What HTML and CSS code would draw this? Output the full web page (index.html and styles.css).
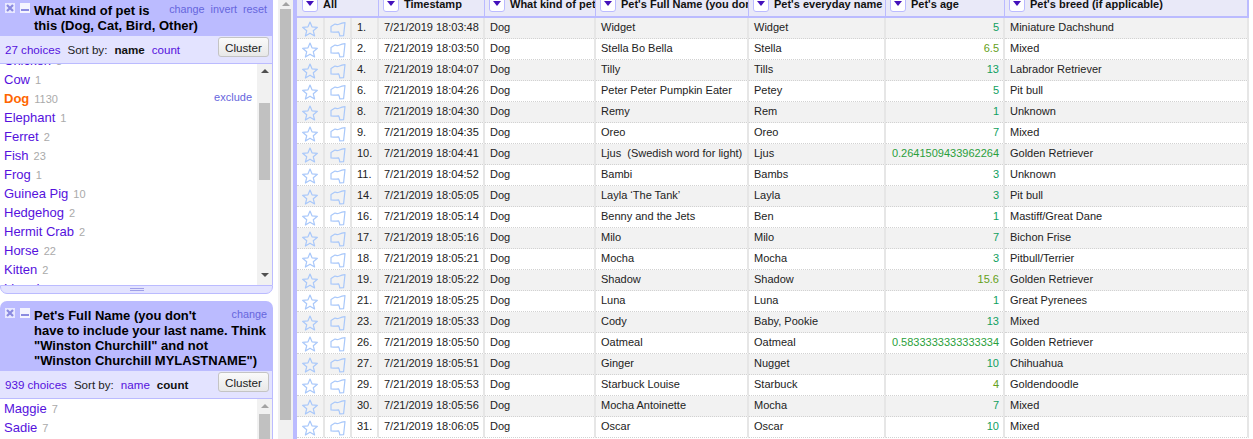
FILE: index.html
```html
<!DOCTYPE html>
<html lang="en">
<head>
<meta charset="utf-8">
<title>Facets and rows</title>
<link rel="stylesheet" href="styles.css">
</head>
<body>
<svg class="defs" width="0" height="0" aria-hidden="true">
  <symbol id="star" viewBox="0 0 16 16"><path d="M8 1 L10 5.8 L15.4 6.3 L11.3 9.8 L12.6 15 L8 12.2 L3.4 15 L4.7 9.8 L0.6 6.3 L6 5.8 Z" fill="none" stroke="#a9c8fa" stroke-width="1.2" stroke-linejoin="round"/></symbol>
  <symbol id="flag" viewBox="0 0 16 16"><path d="M1 5.5 L5 3 Q7 4 9 3.2 Q12 2 15 1.6 L13.6 14.6 L9.8 14.8 Q9.4 12 8.6 10.8 Q5 11.2 1 11 Z" fill="none" stroke="#a9c8fa" stroke-width="1.2" stroke-linejoin="round"/></symbol>
  <symbol id="close" viewBox="0 0 10 10"><rect width="10" height="10" fill="#e8e8ff"/><path d="M2 2 L8 8 M8 2 L2 8" stroke="#8a8ae0" stroke-width="2.2"/></symbol>
  <symbol id="minus" viewBox="0 0 10 10"><rect width="10" height="10" fill="#f4f4ff"/><rect x="1" y="6" width="8" height="2" fill="#8a8ae0"/></symbol>
</svg>

<aside class="left">
  <section class="facet facet-first">
    <header class="facet-head">
      <span class="facet-icons">
        <svg class="tool"><use href="#close"/></svg>
        <svg class="tool"><use href="#minus"/></svg>
      </span>
      <div class="head-text">
        <span class="facet-actions"><a>change</a><a>invert</a><a>reset</a></span>
        <h2 class="facet-title">What kind of pet is this (Dog, Cat, Bird, Other)</h2>
      </div>
    </header>
    <div class="facet-controls">
      <a class="choices">27 choices</a>
      <span>Sort by:</span>
      <b>name</b>
      <a class="choices">count</a>
      <button class="cluster">Cluster</button>
    </div>
    <div class="facet-body body-first">
      <ul class="choice-list list-scrolled">
        <li><a>Chicken</a><span class="n">3</span></li>
        <li><a>Cow</a><span class="n">1</span></li>
        <li><a class="selected">Dog</a><span class="n">1130</span><a class="exclude">exclude</a></li>
        <li><a>Elephant</a><span class="n">1</span></li>
        <li><a>Ferret</a><span class="n">2</span></li>
        <li><a>Fish</a><span class="n">23</span></li>
        <li><a>Frog</a><span class="n">1</span></li>
        <li><a>Guinea Pig</a><span class="n">10</span></li>
        <li><a>Hedgehog</a><span class="n">2</span></li>
        <li><a>Hermit Crab</a><span class="n">2</span></li>
        <li><a>Horse</a><span class="n">22</span></li>
        <li><a>Kitten</a><span class="n">2</span></li>
        <li><a>Lizard</a><span class="n">1</span></li>
      </ul>
      <div class="bar">
        <span class="arrow-up"></span>
        <span class="thumb thumb-first"></span>
        <span class="arrow-down"></span>
      </div>
    </div>
    <div class="resize"><span class="grip"></span></div>
  </section>

  <section class="facet facet-second">
    <header class="facet-head head-round">
      <span class="facet-icons">
        <svg class="tool"><use href="#close"/></svg>
        <svg class="tool"><use href="#minus"/></svg>
      </span>
      <div class="head-text">
        <span class="facet-actions"><a>change</a></span>
        <h2 class="facet-title">Pet's Full Name (you don't have to include your last name. Think "Winston Churchill" and not "Winston Churchill MYLASTNAME")</h2>
      </div>
    </header>
    <div class="facet-controls">
      <a class="choices">939 choices</a>
      <span>Sort by:</span>
      <a class="choices">name</a>
      <b>count</b>
      <button class="cluster">Cluster</button>
    </div>
    <div class="facet-body body-second">
      <ul class="choice-list">
        <li><a>Maggie</a><span class="n">7</span></li>
        <li><a>Sadie</a><span class="n">7</span></li>
      </ul>
      <div class="bar">
        <span class="arrow-up arrow-off"></span>
        <span class="thumb thumb-second"></span>
      </div>
    </div>
  </section>
</aside>

<div class="page-bar">
  <span class="arrow-up arrow-off"></span>
  <span class="page-thumb"></span>
</div>

<main class="main">
  <table class="grid">
    <colgroup>
      <col class="c-star"><col class="c-flag"><col class="c-idx"><col class="c-time"><col class="c-kind"><col class="c-name"><col class="c-day"><col class="c-age"><col class="c-breed">
    </colgroup>
    <thead>
      <tr>
        <th colspan="3"><div class="th-in th-all"><span class="drop"></span>All</div></th>
        <th><div class="th-in"><span class="drop"></span>Timestamp</div></th>
        <th><div class="th-in"><span class="drop"></span>What kind of pet is this (Dog, Cat, Bird, Other)</div></th>
        <th><div class="th-in"><span class="drop"></span>Pet's Full Name (you don't have to include</div></th>
        <th><div class="th-in"><span class="drop"></span>Pet's everyday name</div></th>
        <th><div class="th-in"><span class="drop"></span>Pet's age</div></th>
        <th class="th-last"><div class="th-in"><span class="drop"></span>Pet's breed (if applicable)</div></th>
      </tr>
    </thead>
    <tbody>
      <tr><td class="ic"><svg class="i"><use href="#star"/></svg></td><td class="ic"><svg class="i"><use href="#flag"/></svg></td><td>1.</td><td>7/21/2019 18:03:48</td><td>Dog</td><td>Widget</td><td>Widget</td><td class="num">5</td><td>Miniature Dachshund</td></tr>
      <tr><td class="ic"><svg class="i"><use href="#star"/></svg></td><td class="ic"><svg class="i"><use href="#flag"/></svg></td><td>2.</td><td>7/21/2019 18:03:50</td><td>Dog</td><td>Stella Bo Bella</td><td>Stella</td><td class="num fl">6.5</td><td>Mixed</td></tr>
      <tr><td class="ic"><svg class="i"><use href="#star"/></svg></td><td class="ic"><svg class="i"><use href="#flag"/></svg></td><td>4.</td><td>7/21/2019 18:04:07</td><td>Dog</td><td>Tilly</td><td>Tills</td><td class="num">13</td><td>Labrador Retriever</td></tr>
      <tr><td class="ic"><svg class="i"><use href="#star"/></svg></td><td class="ic"><svg class="i"><use href="#flag"/></svg></td><td>6.</td><td>7/21/2019 18:04:26</td><td>Dog</td><td>Peter Peter Pumpkin Eater</td><td>Petey</td><td class="num">5</td><td>Pit bull</td></tr>
      <tr><td class="ic"><svg class="i"><use href="#star"/></svg></td><td class="ic"><svg class="i"><use href="#flag"/></svg></td><td>8.</td><td>7/21/2019 18:04:30</td><td>Dog</td><td>Remy</td><td>Rem</td><td class="num">1</td><td>Unknown</td></tr>
      <tr><td class="ic"><svg class="i"><use href="#star"/></svg></td><td class="ic"><svg class="i"><use href="#flag"/></svg></td><td>9.</td><td>7/21/2019 18:04:35</td><td>Dog</td><td>Oreo</td><td>Oreo</td><td class="num">7</td><td>Mixed</td></tr>
      <tr><td class="ic"><svg class="i"><use href="#star"/></svg></td><td class="ic"><svg class="i"><use href="#flag"/></svg></td><td>10.</td><td>7/21/2019 18:04:41</td><td>Dog</td><td>Ljus&nbsp; (Swedish word for light)</td><td>Ljus</td><td class="num long">0.2641509433962264</td><td>Golden Retriever</td></tr>
      <tr><td class="ic"><svg class="i"><use href="#star"/></svg></td><td class="ic"><svg class="i"><use href="#flag"/></svg></td><td>11.</td><td>7/21/2019 18:04:52</td><td>Dog</td><td>Bambi</td><td>Bambs</td><td class="num">3</td><td>Unknown</td></tr>
      <tr><td class="ic"><svg class="i"><use href="#star"/></svg></td><td class="ic"><svg class="i"><use href="#flag"/></svg></td><td>14.</td><td>7/21/2019 18:05:05</td><td>Dog</td><td>Layla ‘The Tank’</td><td>Layla</td><td class="num">3</td><td>Pit bull</td></tr>
      <tr><td class="ic"><svg class="i"><use href="#star"/></svg></td><td class="ic"><svg class="i"><use href="#flag"/></svg></td><td>16.</td><td>7/21/2019 18:05:14</td><td>Dog</td><td>Benny and the Jets</td><td>Ben</td><td class="num">1</td><td>Mastiff/Great Dane</td></tr>
      <tr><td class="ic"><svg class="i"><use href="#star"/></svg></td><td class="ic"><svg class="i"><use href="#flag"/></svg></td><td>17.</td><td>7/21/2019 18:05:16</td><td>Dog</td><td>Milo</td><td>Milo</td><td class="num">7</td><td>Bichon Frise</td></tr>
      <tr><td class="ic"><svg class="i"><use href="#star"/></svg></td><td class="ic"><svg class="i"><use href="#flag"/></svg></td><td>18.</td><td>7/21/2019 18:05:21</td><td>Dog</td><td>Mocha</td><td>Mocha</td><td class="num">3</td><td>Pitbull/Terrier</td></tr>
      <tr><td class="ic"><svg class="i"><use href="#star"/></svg></td><td class="ic"><svg class="i"><use href="#flag"/></svg></td><td>19.</td><td>7/21/2019 18:05:22</td><td>Dog</td><td>Shadow</td><td>Shadow</td><td class="num fl">15.6</td><td>Golden Retriever</td></tr>
      <tr><td class="ic"><svg class="i"><use href="#star"/></svg></td><td class="ic"><svg class="i"><use href="#flag"/></svg></td><td>21.</td><td>7/21/2019 18:05:25</td><td>Dog</td><td>Luna</td><td>Luna</td><td class="num">1</td><td>Great Pyrenees</td></tr>
      <tr><td class="ic"><svg class="i"><use href="#star"/></svg></td><td class="ic"><svg class="i"><use href="#flag"/></svg></td><td>23.</td><td>7/21/2019 18:05:33</td><td>Dog</td><td>Cody</td><td>Baby, Pookie</td><td class="num">13</td><td>Mixed</td></tr>
      <tr><td class="ic"><svg class="i"><use href="#star"/></svg></td><td class="ic"><svg class="i"><use href="#flag"/></svg></td><td>26.</td><td>7/21/2019 18:05:50</td><td>Dog</td><td>Oatmeal</td><td>Oatmeal</td><td class="num long">0.5833333333333334</td><td>Golden Retriever</td></tr>
      <tr><td class="ic"><svg class="i"><use href="#star"/></svg></td><td class="ic"><svg class="i"><use href="#flag"/></svg></td><td>27.</td><td>7/21/2019 18:05:51</td><td>Dog</td><td>Ginger</td><td>Nugget</td><td class="num">10</td><td>Chihuahua</td></tr>
      <tr><td class="ic"><svg class="i"><use href="#star"/></svg></td><td class="ic"><svg class="i"><use href="#flag"/></svg></td><td>29.</td><td>7/21/2019 18:05:53</td><td>Dog</td><td>Starbuck Louise</td><td>Starbuck</td><td class="num fl">4</td><td>Goldendoodle</td></tr>
      <tr><td class="ic"><svg class="i"><use href="#star"/></svg></td><td class="ic"><svg class="i"><use href="#flag"/></svg></td><td>30.</td><td>7/21/2019 18:05:56</td><td>Dog</td><td>Mocha Antoinette</td><td>Mocha</td><td class="num">7</td><td>Mixed</td></tr>
      <tr><td class="ic"><svg class="i"><use href="#star"/></svg></td><td class="ic"><svg class="i"><use href="#flag"/></svg></td><td>31.</td><td>7/21/2019 18:06:05</td><td>Dog</td><td>Oscar</td><td>Oscar</td><td class="num">10</td><td>Mixed</td></tr>
    </tbody>
  </table>
</main>
</body>
</html>
```
FILE: styles.css
```css
* { box-sizing: border-box; }
html, body { margin: 0; height: 439px; overflow: hidden; }
body { display: flex; background: #fff; font-family: "Liberation Sans", Arial, sans-serif; color: #000; }
.defs { display: none; }
a { cursor: pointer; }

/* left column */
.left { width: 278px; height: 439px; overflow: hidden; flex: none; }
.facet { width: 273px; }
.facet-second { margin-top: 7px; }
.facet-head { display: flex; align-items: flex-start; background: #bbbbff; padding: 3px 6px 0 5px; height: 36px; }
.head-round { border-radius: 7px 7px 0 0; padding-top: 7px; height: 70px; }
.facet-icons { display: flex; gap: 5px; flex: none; width: 29px; }
.tool { width: 10px; height: 10px; display: block; }
.head-text { flex: 1; min-width: 0; }
.facet-title { margin: 0; font-size: 13px; line-height: 15px; font-weight: bold; color: #000; }
.facet-actions { float: right; display: flex; gap: 6px; margin-left: 8px; font-size: 10.8px; line-height: 12px; color: #6666dd; }

.facet-controls { display: flex; align-items: center; gap: 7px; height: 28px; background: #e3e3ff; border-bottom: 1px solid #bbbbff; border-right: 1px solid #bbbbff; padding: 0 3px 0 5px; font-size: 11.6px; color: #222; }
.facet-controls b { color: #111; }
.choices { color: #5511dd; }
.cluster { margin-left: auto; width: 51px; height: 20px; padding: 0; margin-top: -5px; font: 11.7px "Liberation Sans", Arial, sans-serif; color: #222; background: linear-gradient(#fafafa, #e8e8e8); border: 1px solid #c4c4c4; border-radius: 3px; }

.facet-body { display: flex; background: #fff; border-right: 1px solid #bbbbff; overflow: hidden; }
.body-first { height: 221px; }
.body-second { height: 60px; }
.choice-list { list-style: none; margin: 0; padding: 0; flex: 1; min-width: 0; }
.list-scrolled { margin-top: -13px; }
.choice-list li { display: flex; align-items: center; height: 19px; padding-left: 4px; font-size: 13px; color: #5511dd; }
.n { margin-left: 5px; font-size: 11px; color: #aaa; }
.selected { color: #ff6600; font-weight: bold; }
.exclude { margin-left: auto; margin-right: 5px; margin-top: -3px; font-size: 11px; color: #6666dd; }

.bar { width: 15px; flex: none; background: #f1f1f1; display: flex; flex-direction: column; align-items: center; }
.body-first .bar { height: 221px; }
.arrow-up, .arrow-down { width: 0; height: 0; border-left: 4px solid transparent; border-right: 4px solid transparent; flex: none; }
.arrow-up { border-bottom: 4px solid #505050; margin-top: 5px; }
.arrow-down { border-top: 4px solid #505050; margin-top: 93px; }
.arrow-off { border-bottom-color: #a3a3a3; }
.thumb { display: block; width: 11px; background: #c1c1c1; flex: none; }
.thumb-first { height: 77px; margin-top: 30px; }
.thumb-second { height: 40px; margin-top: 6px; }

.resize { height: 9px; background: #e3e3ff; border: 1px solid #bbbbff; border-radius: 0 0 7px 7px; display: flex; justify-content: center; padding-top: 2px; }
.grip { display: block; width: 14px; height: 3px; border-top: 1px solid #9f9fe8; border-bottom: 1px solid #9f9fe8; }

/* page scrollbar */
.page-bar { width: 15px; height: 439px; flex: none; background: #f1f1f1; display: flex; flex-direction: column; align-items: center; }
.page-bar .arrow-up { margin-top: 2px; }
.page-thumb { display: block; width: 11px; height: 411px; margin-top: 3px; background: #bdbdbd; flex: none; }

/* data table */
.main { flex: 1; min-width: 0; height: 439px; overflow: hidden; border-left: 4px solid #bbbbff; }
.grid { border-collapse: separate; border-spacing: 0; table-layout: fixed; width: 952px; margin-top: -8px; font-size: 11px; color: #222; }
.c-star { width: 28px; }
.c-flag { width: 27px; }
.c-idx { width: 27px; }
.c-time { width: 106px; }
.c-kind { width: 111px; }
.c-name { width: 153px; }
.c-day { width: 137px; }
.c-age { width: 119px; }
.c-breed { width: 244px; }
.grid th { height: 26px; padding: 0; background: #e9e9f8; border-bottom: 2px solid #bbbbff; border-right: 1px solid #bbbbff; font-size: 11px; text-align: left; overflow: hidden; }
.grid th.th-last { border-right-width: 2px; }
.th-in { display: flex; align-items: center; gap: 5px; padding-left: 4px; white-space: nowrap; overflow: hidden; height: 24px; color: #111; }
.th-all { padding-left: 5px; }
.drop { flex: none; width: 16px; height: 16px; background: #fff; border: 1px solid #bbbbff; border-radius: 3px; position: relative; }
.drop::after { content: ""; position: absolute; left: 3px; top: 4px; border-left: 4px solid transparent; border-right: 4px solid transparent; border-top: 5px solid #4411bb; }
.grid td { height: 21px; padding: 0 5px 2px 5px; border-right: 2px solid #e6e6e6; border-bottom: 1px dotted #d2d2d2; white-space: nowrap; overflow: hidden; }
.grid tbody tr:nth-child(odd) td { background: #f2f2f2; }
.grid td.ic { padding: 0; text-align: center; }
.i { width: 16px; height: 16px; display: inline-block; vertical-align: middle; margin-top: 1px; }
.grid td.num { text-align: right; color: #10a060; padding-right: 4px; }
.grid td.fl { color: #64a020; }
.grid td.long { color: #2a9f3c; }
```
